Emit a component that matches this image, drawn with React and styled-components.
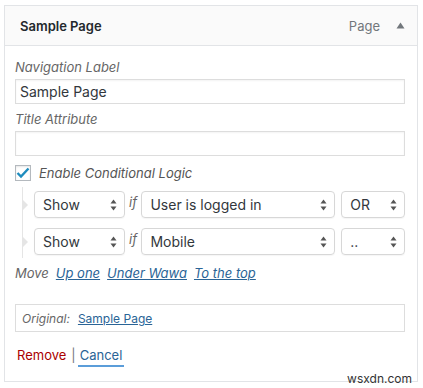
import styled, { createGlobalStyle } from "styled-components";

const GlobalStyle = createGlobalStyle`
  body {
    margin: 0;
    background: #fff;
    font-family: Inter, "Liberation Sans", sans-serif;
    color: #23282d;
  }
`;

const Page = styled.div`
  position: relative;
  width: 423px;
  height: 388px;
  padding: 5px 0 0 4px;
  box-sizing: border-box;
`;

const Panel = styled.div`
  width: 414px;
  height: 377px;
  box-sizing: border-box;
  border: 1px solid #e2e4e7;
  background: #fff;
`;

const Header = styled.div`
  height: 40px;
  box-sizing: border-box;
  display: flex;
  align-items: center;
  padding: 0 12px 0 15px;
  border-bottom: 1px solid #e2e4e7;
  background: #fafafa;
`;

const Title = styled.div`
  flex: 1;
  font-size: 13px;
  font-weight: 600;
  color: #23282d;
`;

const Type = styled.span`
  font-size: 13px;
  color: #72777c;
  margin-right: 16px;
`;

const Body = styled.div`
  padding: 13px 12px 0 10px;
`;

const Label = styled.div`
  font-size: 13px;
  font-style: italic;
  color: #666;
  line-height: 16px;
  margin: ${(p) => (p.$first ? "0" : "7px")} 0 4px;
`;

const Input = styled.input`
  display: block;
  width: 100%;
  height: 25px;
  box-sizing: border-box;
  border: 1px solid #ddd;
  box-shadow: inset 0 1px 2px rgba(0, 0, 0, 0.05);
  padding: 0 4px;
  font-family: inherit;
  font-size: 14px;
  color: #32373c;
  outline: none;
`;

const CheckRow = styled.label`
  display: flex;
  align-items: center;
  gap: 8px;
  height: 16px;
  margin-top: 9px;
  font-size: 13px;
  font-style: italic;
  color: #555;
`;

const Box = styled.span`
  width: 16px;
  height: 16px;
  box-sizing: border-box;
  border: 1px solid #b4b9be;
  box-shadow: inset 0 1px 2px rgba(0, 0, 0, 0.1);
  display: flex;
  align-items: center;
  justify-content: center;
`;

const Rules = styled.div`
  margin: 6px 0 0 7px;
  border-left: 1px solid #e5e5e5;
  padding: 4px 0 3px 11px;
  display: flex;
  flex-direction: column;
  gap: 10px;
`;

const RuleRow = styled.div`
  position: relative;
  display: flex;
  align-items: center;
`;

const Pointer = styled.span`
  position: absolute;
  left: -11px;
  top: 9px;
  width: 0;
  height: 0;
  border-top: 5px solid transparent;
  border-bottom: 5px solid transparent;
  border-left: 5px solid #e5e5e5;
`;

const Select = styled.div`
  width: ${(p) => p.$w}px;
  height: 27px;
  box-sizing: border-box;
  border: 1px solid #d7d7d7;
  border-radius: 4px;
  box-shadow: 0 1px 1px rgba(0, 0, 0, 0.04);
  display: flex;
  align-items: center;
  padding: 0 7px 0 8px;
  font-size: 14px;
  color: #32373c;
`;

const SelectText = styled.span`
  flex: 1;
`;

const If = styled.span`
  width: 17px;
  text-align: center;
  font-size: 13px;
  font-style: italic;
  color: #666;
  margin-top: -5px;
`;

const Gap = styled.span`
  width: 6px;
`;

const MoveRow = styled.div`
  display: flex;
  gap: 7px;
  margin-top: 6px;
  font-size: 13px;
  font-style: italic;
  color: #666;
  line-height: 18px;
`;

const Link = styled.a`
  color: #2a6496;
  font-style: ${(p) => (p.$plain ? "normal" : "inherit")};
  text-decoration: underline;
  cursor: pointer;
`;

const Original = styled.div`
  margin-top: 22px;
  height: 28px;
  box-sizing: border-box;
  border: 1px solid #ddd;
  display: flex;
  align-items: center;
  gap: 8px;
  padding: 0 6px;
  font-size: 12px;
`;

const OrigLabel = styled.span`
  font-style: italic;
  color: #666;
`;

const Actions = styled.div`
  margin-top: 15px;
  padding-left: 2px;
  font-size: 13px;
  color: #72777c;
  display: flex;
  align-items: flex-start;
`;

const Remove = styled.a`
  color: #a00;
  margin-right: 5px;
`;

const Bar = styled.span`
  margin-right: 2px;
`;

const Cancel = styled.a`
  color: #2a6496;
  padding: 0 2px 2px;
  border-bottom: 2px solid #5b9dd9;
`;

const Watermark = styled.div`
  position: absolute;
  right: 11px;
  bottom: 2px;
  font-size: 12px;
  color: #333;
`;

const Arrows = () => (
  <svg width="7" height="12" viewBox="0 0 7 12">
    <path d="M3.5 0.5 L6.5 4.5 H0.5 Z" fill="#555" />
    <path d="M3.5 11.5 L6.5 7.5 H0.5 Z" fill="#555" />
  </svg>
);

const Dropdown = ({ w, children }) => (
  <Select $w={w}>
    <SelectText>{children}</SelectText>
    <Arrows />
  </Select>
);

const rules = [
  { show: "Show", cond: "User is logged in", op: "OR" },
  { show: "Show", cond: "Mobile", op: ".." },
];

export default function App() {
  return (
    <Page>
      <GlobalStyle />
      <Panel>
        <Header>
          <Title>Sample Page</Title>
          <Type>Page</Type>
          <svg width="9" height="7" viewBox="0 0 9 7">
            <path d="M4.5 0.5 L8.5 6.5 H0.5 Z" fill="#72777c" />
          </svg>
        </Header>
        <Body>
          <Label $first>Navigation Label</Label>
          <Input defaultValue="Sample Page" />
          <Label>Title Attribute</Label>
          <Input defaultValue="" />
          <CheckRow>
            <Box>
              <svg width="14" height="12" viewBox="0 0 14 12">
                <path d="M1.5 6 L5 9.5 L12.5 1.5" fill="none" stroke="#1e8cbe" strokeWidth="2.4" />
              </svg>
            </Box>
            Enable Conditional Logic
          </CheckRow>
          <Rules>
            {rules.map((r, i) => (
              <RuleRow key={i}>
                <Pointer />
                <Dropdown w={91}>{r.show}</Dropdown>
                <If>if</If>
                <Dropdown w={195}>{r.cond}</Dropdown>
                <Gap />
                <Dropdown w={64}>{r.op}</Dropdown>
              </RuleRow>
            ))}
          </Rules>
          <MoveRow>
            <span>Move</span>
            <Link>Up one</Link>
            <Link>Under Wawa</Link>
            <Link>To the top</Link>
          </MoveRow>
          <Original>
            <OrigLabel>Original:</OrigLabel>
            <Link $plain>Sample Page</Link>
          </Original>
          <Actions>
            <Remove>Remove</Remove>
            <Bar>|</Bar>
            <Cancel>Cancel</Cancel>
          </Actions>
        </Body>
      </Panel>
      <Watermark>wsxdn.com</Watermark>
    </Page>
  );
}
